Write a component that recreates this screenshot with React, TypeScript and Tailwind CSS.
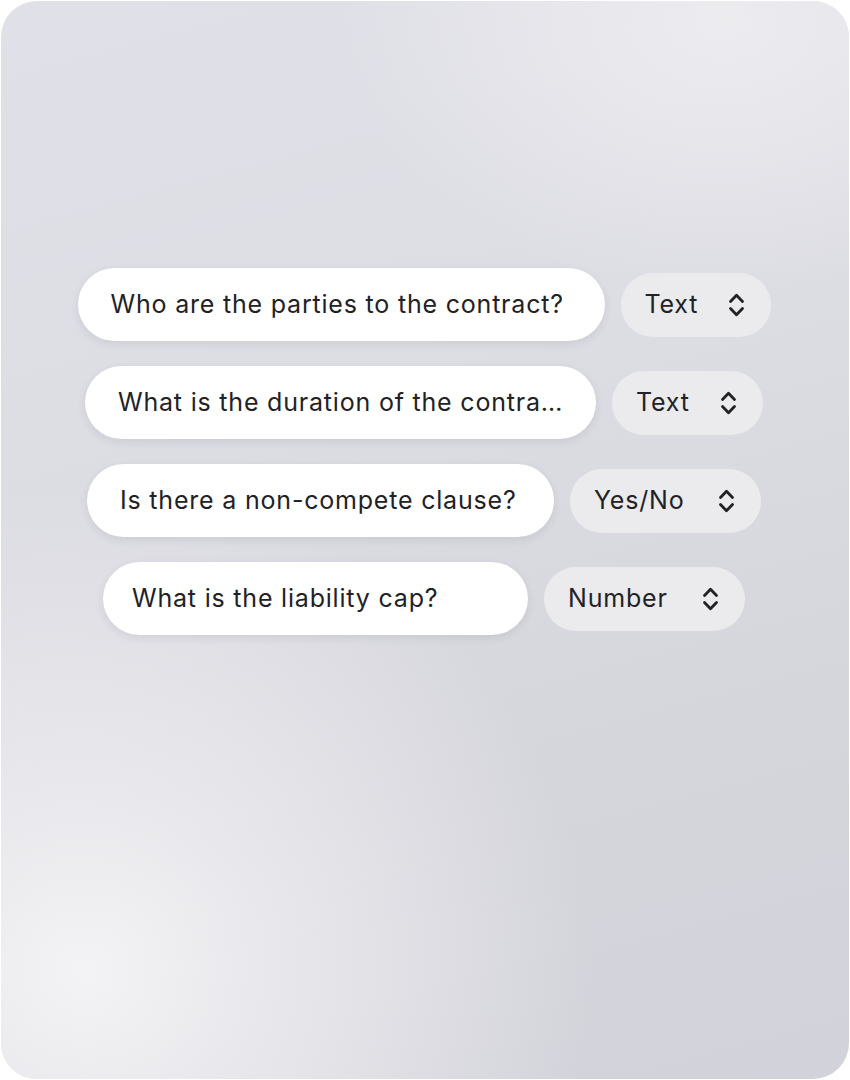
import React from "react";

type Row = {
  question: string;
  type: string;
  pillW: string;
  pillPl: string;
  selectW: string;
};

const rows: Row[] = [
  { question: "Who are the parties to the contract?", type: "Text", pillW: "w-[527px]", pillPl: "pl-[33px]", selectW: "w-[150px]" },
  { question: "What is the duration of the contract?", type: "Text", pillW: "w-[511px]", pillPl: "pl-[33px]", selectW: "w-[151px]" },
  { question: "Is there a non-compete clause?", type: "Yes/No", pillW: "w-[467px]", pillPl: "pl-[33px]", selectW: "w-[191px]" },
  { question: "What is the liability cap?", type: "Number", pillW: "w-[425px]", pillPl: "pl-[29px]", selectW: "w-[201px]" },
];

function UpDown() {
  return (
    <svg width="17" height="26" viewBox="0 0 17 26" fill="none" className="shrink-0">
      <path d="M2.5 9.5L8.5 3.2L14.5 9.5" stroke="#222226" strokeWidth="2.8" strokeLinecap="round" strokeLinejoin="round" />
      <path d="M2.5 16.5L8.5 22.8L14.5 16.5" stroke="#222226" strokeWidth="2.8" strokeLinecap="round" strokeLinejoin="round" />
    </svg>
  );
}

export default function App() {
  return (
    <div className="min-h-screen bg-white p-px" style={{ fontFamily: "Inter, 'Noto Sans', sans-serif" }}>
      <div className="relative h-[1078px] w-[848px] overflow-hidden rounded-[36px] bg-[linear-gradient(165deg,#e0e0e8_0%,#dddde4_35%,#d5d5dc_70%,#d2d2da_100%)]">
        {/* soft light glows */}
        <div className="pointer-events-none absolute inset-0 bg-[radial-gradient(ellipse_60%_45%_at_10%_90%,rgba(245,245,247,0.95),rgba(245,245,247,0)_100%)]" />
        <div className="pointer-events-none absolute inset-0 bg-[radial-gradient(ellipse_45%_25%_at_85%_2%,rgba(238,238,241,0.9),rgba(238,238,241,0)_100%)]" />

        <div className="relative flex flex-col items-center gap-[25px] pr-[2px] pt-[267px]">
          {rows.map((r) => (
            <div key={r.question} className="flex items-center gap-4">
              <div
                className={`${r.pillW} ${r.pillPl} flex h-[73px] items-center rounded-full bg-white pr-[30px] shadow-[0_3px_8px_rgba(60,60,80,0.10)]`}
              >
                <span className="min-w-0 truncate text-[25px] leading-normal tracking-[0.8px] text-[#222226]">
                  {r.question}
                </span>
              </div>
              <div
                className={`${r.selectW} flex h-[64px] items-center justify-between rounded-full bg-[#ebebee] pl-6 pr-[26px]`}
              >
                <span className="text-[25px] leading-normal tracking-[0.8px] text-[#222226]">{r.type}</span>
                <UpDown />
              </div>
            </div>
          ))}
        </div>
      </div>
    </div>
  );
}
